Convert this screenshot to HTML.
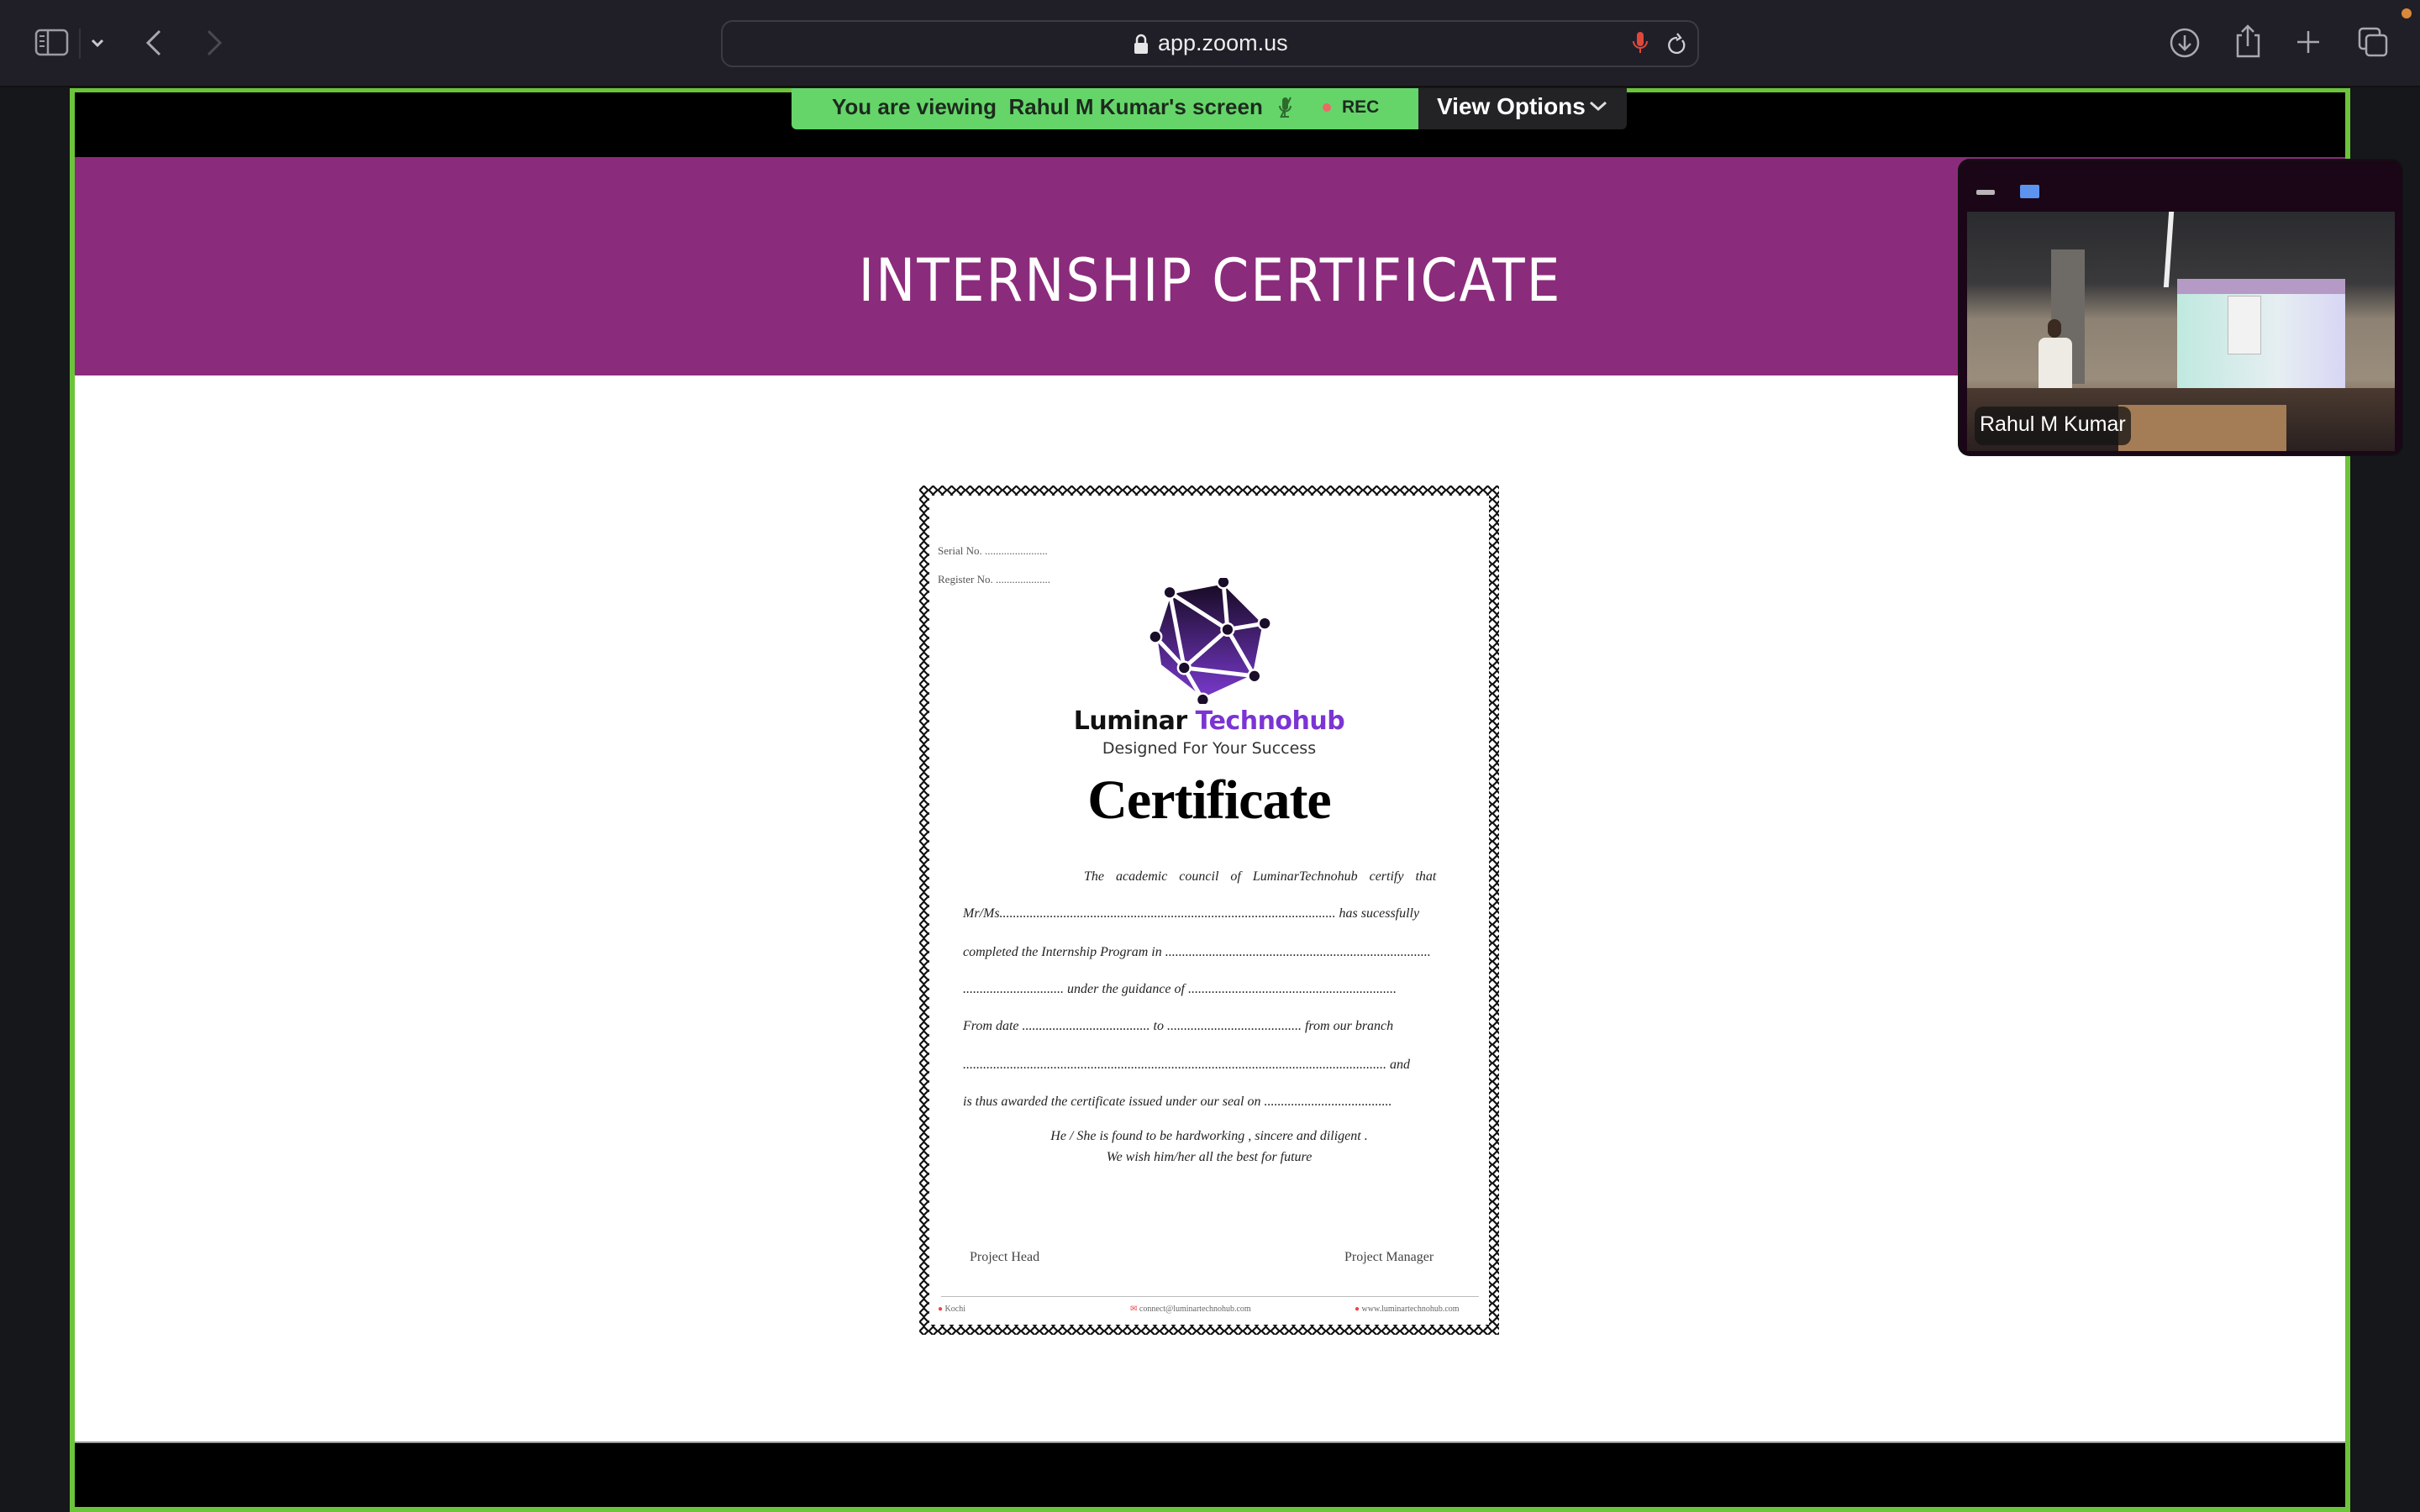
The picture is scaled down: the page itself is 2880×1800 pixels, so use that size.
<!DOCTYPE html>
<html><head><meta charset="utf-8">
<style>
*{margin:0;padding:0;box-sizing:border-box}
html,body{width:2880px;height:1800px;overflow:hidden;background:#16171b;font-family:"Liberation Sans",sans-serif}
.abs{position:absolute}
#tb{left:0;top:0;width:2880px;height:104px;background:#201f28;border-bottom:2px solid #111}
#url{left:858px;top:24px;width:1164px;height:56px;border:2px solid #3c3b44;border-radius:14px;background:#201f28}
#frame{left:83px;top:105px;width:2714px;height:1695px;background:#6cc43b}
#inner{left:89px;top:110px;width:2702px;height:1684px;background:#000}
#purple{left:89px;top:187px;width:2702px;height:260px;background:#8b2b7b}
#white{left:89px;top:447px;width:2702px;height:1269px;background:#fff}
.cert{font-family:"Liberation Serif",serif;font-style:italic;color:#222;font-size:16px;position:absolute;white-space:nowrap}
</style></head><body>
<div id="tb" class="abs"></div>
<svg class="abs" style="left:0;top:0" width="300" height="104">
<rect x="43" y="36" width="37" height="29" rx="5" fill="none" stroke="#9d9ca3" stroke-width="2.5"/>
<line x1="57" y1="36" x2="57" y2="65" stroke="#9d9ca3" stroke-width="2.5"/>
<line x1="47" y1="43" x2="53" y2="43" stroke="#9d9ca3" stroke-width="2"/><line x1="47" y1="49" x2="53" y2="49" stroke="#9d9ca3" stroke-width="2"/><line x1="47" y1="55" x2="53" y2="55" stroke="#9d9ca3" stroke-width="2"/>
<line x1="95" y1="34" x2="95" y2="70" stroke="#3a3942" stroke-width="1.5"/>
<polyline points="110,48 116,54 122,48" fill="none" stroke="#c9c8ce" stroke-width="3"/>
<polyline points="190,37 176,51 190,65" fill="none" stroke="#a9a8ae" stroke-width="3"/>
<polyline points="248,37 262,51 248,65" fill="none" stroke="#4a4951" stroke-width="3"/>
</svg>
<div id="url" class="abs"></div>
<svg class="abs" style="left:1348px;top:40px" width="20" height="26"><path d="M5 11 V7 a5 5 0 0 1 10 0 V11" fill="none" stroke="#e6e6e6" stroke-width="2.5"/><rect x="2" y="11" width="16" height="13" rx="2" fill="#e6e6e6"/></svg>
<div class="abs" style="left:1378px;top:36px;font-size:27px;color:#ececec">app.zoom.us</div>
<svg class="abs" style="left:1940px;top:36px" width="70" height="32"><rect x="8" y="2" width="8" height="17" rx="4" fill="#e0473b"/><path d="M4 13 a8 8 0 0 0 16 0 M12 21 V27" fill="none" stroke="#e0473b" stroke-width="2"/>
<path d="M56 9 a9 9 0 1 0 6 3" fill="none" stroke="#cfcfd4" stroke-width="2.3"/><polyline points="56,4 60,9 55,12" fill="none" stroke="#cfcfd4" stroke-width="2.3"/></svg>
<svg class="abs" style="left:2560px;top:0" width="320" height="104">
<circle cx="40" cy="51" r="16" fill="none" stroke="#a9a8ae" stroke-width="2.5"/><path d="M40 42 V59 M33 52 L40 59 L47 52" fill="none" stroke="#a9a8ae" stroke-width="2.5"/>
<path d="M108 42 H103 V67 H128 V42 H123 M115 55 V32 M108 38 L115 31 L122 38" fill="none" stroke="#a9a8ae" stroke-width="2.5"/>
<path d="M187 37 V63 M174 50 H200" stroke="#a9a8ae" stroke-width="2.5"/>
<rect x="248" y="34" width="24" height="24" rx="4" fill="none" stroke="#a9a8ae" stroke-width="2.5"/>
<rect x="256" y="42" width="24" height="24" rx="4" fill="#201f28" stroke="#a9a8ae" stroke-width="2.5"/>
<circle cx="304" cy="16" r="6" fill="#d9893a"/>
</svg>
<div id="frame" class="abs"></div>
<div id="inner" class="abs"></div>
<div id="purple" class="abs"></div>
<div id="white" class="abs"></div>
<div class="abs" style="left:89px;top:1716px;width:2702px;height:2px;background:#999"></div>
<div class="abs" style="left:942px;top:105px;width:746px;height:49px;background:#65d56a;border-radius:0 0 0 6px"></div>
<div class="abs" style="left:1688px;top:105px;width:248px;height:49px;background:#232325;border-radius:0 0 6px 0"></div>
<div class="abs" style="left:990px;top:112px;font-size:26px;font-weight:bold;color:#1d2a1d;white-space:nowrap">You are viewing&nbsp; Rahul M Kumar's screen</div>
<svg class="abs" style="left:1522px;top:114px" width="90" height="30"><rect x="4" y="2" width="7" height="15" rx="3.5" fill="#2d6b2d"/><path d="M1 12 a6.5 6.5 0 0 0 13 0 M7 19 V24 M2 25 H12" fill="none" stroke="#2d6b2d" stroke-width="2"/><line x1="14" y1="2" x2="2" y2="26" stroke="#2d6b2d" stroke-width="2"/><circle cx="57" cy="14" r="5" fill="#ea6b66"/></svg>
<div class="abs" style="left:1597px;top:116px;font-size:21px;font-weight:bold;color:#1d2a1d">REC</div>
<div class="abs" style="left:1710px;top:111px;font-size:28px;font-weight:bold;color:#fff">View Options</div>
<svg class="abs" style="left:1890px;top:118px" width="24" height="16"><polyline points="3,4 12,12 21,4" fill="none" stroke="#ddd" stroke-width="3"/></svg>
<div class="abs" style="left:89px;top:293px;width:2702px;text-align:center;font-size:70px;color:#fff;letter-spacing:2px;font-family:'DejaVu Sans Condensed','DejaVu Sans',sans-serif">INTERNSHIP CERTIFICATE</div>
<svg class="abs" style="left:1094px;top:578px" width="690" height="1011">
<defs><pattern id="d" width="11" height="11" patternUnits="userSpaceOnUse"><path d="M5.5 0.5 L10.5 5.5 L5.5 10.5 L0.5 5.5Z" fill="#fff" stroke="#111" stroke-width="2.2"/></pattern></defs>
<rect x="0" y="0" width="690" height="1011" fill="url(#d)"/>
<rect x="12" y="12" width="666" height="987" fill="#fff"/>
</svg>
<div class="cert" style="left:1116px;top:648px;font-style:normal;font-size:13px;color:#555">Serial No. .......................</div>
<div class="cert" style="left:1116px;top:682px;font-style:normal;font-size:13px;color:#555">Register No. ....................</div>
<svg class="abs" style="left:1360px;top:688px" width="160" height="150" viewBox="10 8 114 122">
<defs><linearGradient id="lg" x1="0" y1="0" x2="0" y2="1"><stop offset="0" stop-color="#150a20"/><stop offset="1" stop-color="#7a3ad0"/></linearGradient></defs>
<polygon points="28,22 80,12 120,52 110,103 60,126 18,93 14,65" fill="url(#lg)"/>
<g stroke="#fff" stroke-width="4" fill="none"><path d="M28,22 L80,12 L120,52 L110,103 L60,126 L18,93 L14,65 Z M80,12 L84,58 M28,22 L84,58 M84,58 L120,52 M84,58 L42,95 M84,58 L110,103 M42,95 L14,65 M42,95 L60,126 M28,22 L42,95 M42,95 L110,103"/></g>
<g fill="#1a0d2a" stroke="#fff" stroke-width="2"><circle cx="28" cy="22" r="6"/><circle cx="80" cy="12" r="6"/><circle cx="120" cy="52" r="6"/><circle cx="110" cy="103" r="6"/><circle cx="60" cy="126" r="6"/><circle cx="14" cy="65" r="6"/><circle cx="84" cy="58" r="6"/><circle cx="42" cy="95" r="6"/></g>
</svg>
<div class="abs" style="left:1094px;top:841px;width:690px;text-align:center;font-size:30px;font-weight:bold;color:#111;font-family:'DejaVu Sans',sans-serif;letter-spacing:-0.5px">Luminar <span style="color:#7b34d4">Technohub</span></div>
<div class="abs" style="left:1094px;top:880px;width:690px;text-align:center;font-size:19px;color:#333;font-family:'DejaVu Sans',sans-serif">Designed For Your Success</div>
<div class="abs" style="left:1094px;top:915px;width:690px;text-align:center;font-size:66px;font-weight:bold;color:#000;font-family:'Liberation Serif',serif;letter-spacing:-1px">Certificate</div>
<div class="cert" style="left:1290px;top:1035px;word-spacing:10px">The academic council of LuminarTechnohub certify that</div>
<div class="cert" style="left:1146px;top:1079px">Mr/Ms.................................................................................................... has sucessfully</div>
<div class="cert" style="left:1146px;top:1125px">completed the Internship Program in ...............................................................................</div>
<div class="cert" style="left:1146px;top:1169px">.............................. under the guidance of ..............................................................</div>
<div class="cert" style="left:1146px;top:1213px">From date ...................................... to ........................................ from our branch</div>
<div class="cert" style="left:1146px;top:1259px">.............................................................................................................................. and</div>
<div class="cert" style="left:1146px;top:1303px">is thus awarded the certificate issued under our seal on ......................................</div>
<div class="cert" style="left:1094px;top:1344px;width:690px;text-align:center">He / She is found to be hardworking , sincere and diligent .</div>
<div class="cert" style="left:1094px;top:1369px;width:690px;text-align:center">We wish him/her all the best for future</div>
<div class="cert" style="left:1154px;top:1488px;font-style:normal;font-size:16px;color:#444">Project Head</div>
<div class="cert" style="left:1600px;top:1488px;font-style:normal;font-size:16px;color:#444">Project Manager</div>
<div class="abs" style="left:1120px;top:1543px;width:640px;height:1px;background:#bbb"></div>
<div class="cert" style="left:1116px;top:1553px;font-style:normal;font-size:10px;color:#666"><span style="color:#e44">●</span> Kochi</div>
<div class="cert" style="left:1345px;top:1553px;font-style:normal;font-size:10px;color:#666"><span style="color:#e44">✉</span> connect@luminartechnohub.com</div>
<div class="cert" style="left:1612px;top:1553px;font-style:normal;font-size:10px;color:#666"><span style="color:#e44">●</span> www.luminartechnohub.com</div>
<div class="abs" style="left:2332px;top:191px;width:526px;height:350px;background:#1b0618;border-radius:12px;box-shadow:0 0 0 2px #111"></div>
<div class="abs" style="left:2352px;top:226px;width:22px;height:6px;background:#b8b4b8;border-radius:2px"></div>
<div class="abs" style="left:2404px;top:220px;width:23px;height:16px;background:#5b93ef;border-radius:2px"></div>
<div class="abs" style="left:2341px;top:252px;width:509px;height:285px;overflow:hidden;background:linear-gradient(180deg,#2a2b2e 0%,#3a3a3c 30%,#8d8273 45%,#9a8d7c 70%,#6b5645 85%,#3a2e27 100%)">
  <div class="abs" style="left:250px;top:95px;width:200px;height:120px;background:linear-gradient(90deg,#bfe9df,#e6eef2 60%,#d8d6f4)"></div>
  <div class="abs" style="left:250px;top:80px;width:200px;height:18px;background:#b59ac6"></div>
  <div class="abs" style="left:310px;top:100px;width:40px;height:70px;background:#f2f2f2;border:1px solid #bbb"></div>
  <div class="abs" style="left:100px;top:45px;width:40px;height:160px;background:#6e6b66"></div>
  <div class="abs" style="left:237px;top:0;width:6px;height:90px;background:#eee;transform:skewX(-4deg)"></div>
  <div class="abs" style="left:85px;top:150px;width:40px;height:70px;background:#eeeae4;border-radius:8px 8px 0 0"></div>
  <div class="abs" style="left:96px;top:128px;width:16px;height:22px;background:#3a2a20;border-radius:8px"></div>
  <div class="abs" style="left:0;top:210px;width:509px;height:75px;background:linear-gradient(180deg,#4a3a30,#2a2020)"></div>
  <div class="abs" style="left:180px;top:230px;width:200px;height:55px;background:#a47c55"></div>
</div>
<div class="abs" style="left:2350px;top:484px;width:186px;height:46px;background:rgba(20,20,20,.75);border-radius:10px"></div>
<div class="abs" style="left:2356px;top:491px;font-size:25px;color:#fff">Rahul M Kumar</div>
</body></html>
